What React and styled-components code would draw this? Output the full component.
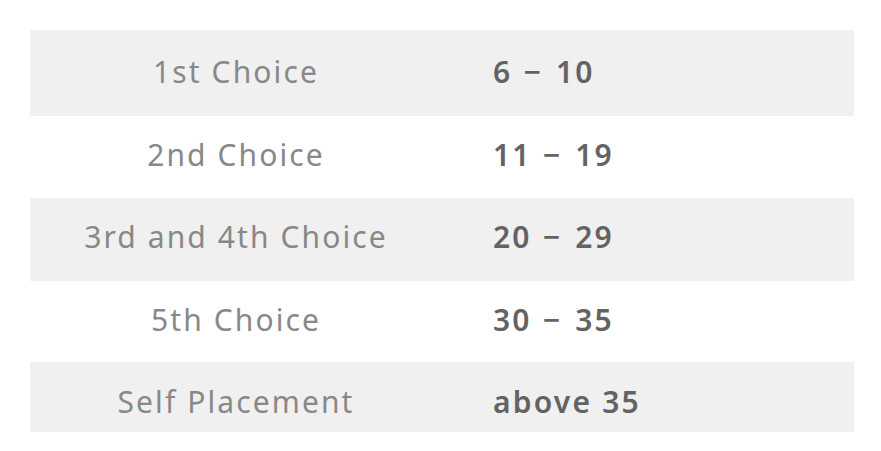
import React from "react";
import styled, { createGlobalStyle } from "styled-components";

const GlobalStyle = createGlobalStyle`
  html, body {
    margin: 0;
    padding: 0;
    background: #ffffff;
  }
  body {
    font-family: "Noto Sans", "DejaVu Sans", sans-serif;
  }
`;

const Page = styled.div`
  padding: 30px 27px 0 30px;
`;

const Table = styled.table`
  width: 824px;
  border-collapse: collapse;
`;

const Row = styled.tr`
  background: ${(p) => (p.$shaded ? "#f0f0f0" : "#ffffff")};
  height: ${(p) => p.$height}px;
`;

const Label = styled.td`
  width: 412px;
  text-align: center;
  font-size: 30px;
  color: #888888;
  letter-spacing: 2.1px;
  padding: ${(p) => (p.$shift > 0 ? `${p.$shift}px 0 0` : `0 0 ${-p.$shift}px`)};
`;

const Range = styled.td`
  text-align: left;
  padding: ${(p) =>
    p.$shift > 0 ? `${p.$shift}px 0 0 51px` : `0 0 ${-p.$shift}px 51px`};
  font-size: 30px;
  font-weight: 600;
  letter-spacing: 2.2px;
  color: #636363;
`;

const Dash = styled.span`
  margin: 0 13px 0 11px;
`;

const rows = [
  ["1st Choice", ["6", "10"], 86, -4],
  ["2nd Choice", ["11", "19"], 82, -6],
  ["3rd and 4th Choice", ["20", "29"], 83, -6],
  ["5th Choice", ["30", "35"], 81, -4],
  ["Self Placement", "above 35", 70, 8],
];

export default function App() {
  return (
    <>
      <GlobalStyle />
      <Page>
        <Table>
          <tbody>
            {rows.map(([label, range, height, shift], i) => (
              <Row key={label} $shaded={i % 2 === 0} $height={height}>
                <Label $shift={shift}>{label}</Label>
                <Range $shift={shift}>
                  {Array.isArray(range) ? (
                    <>
                      {range[0]}
                      <Dash>−</Dash>
                      {range[1]}
                    </>
                  ) : (
                    range
                  )}
                </Range>
              </Row>
            ))}
          </tbody>
        </Table>
      </Page>
    </>
  );
}
